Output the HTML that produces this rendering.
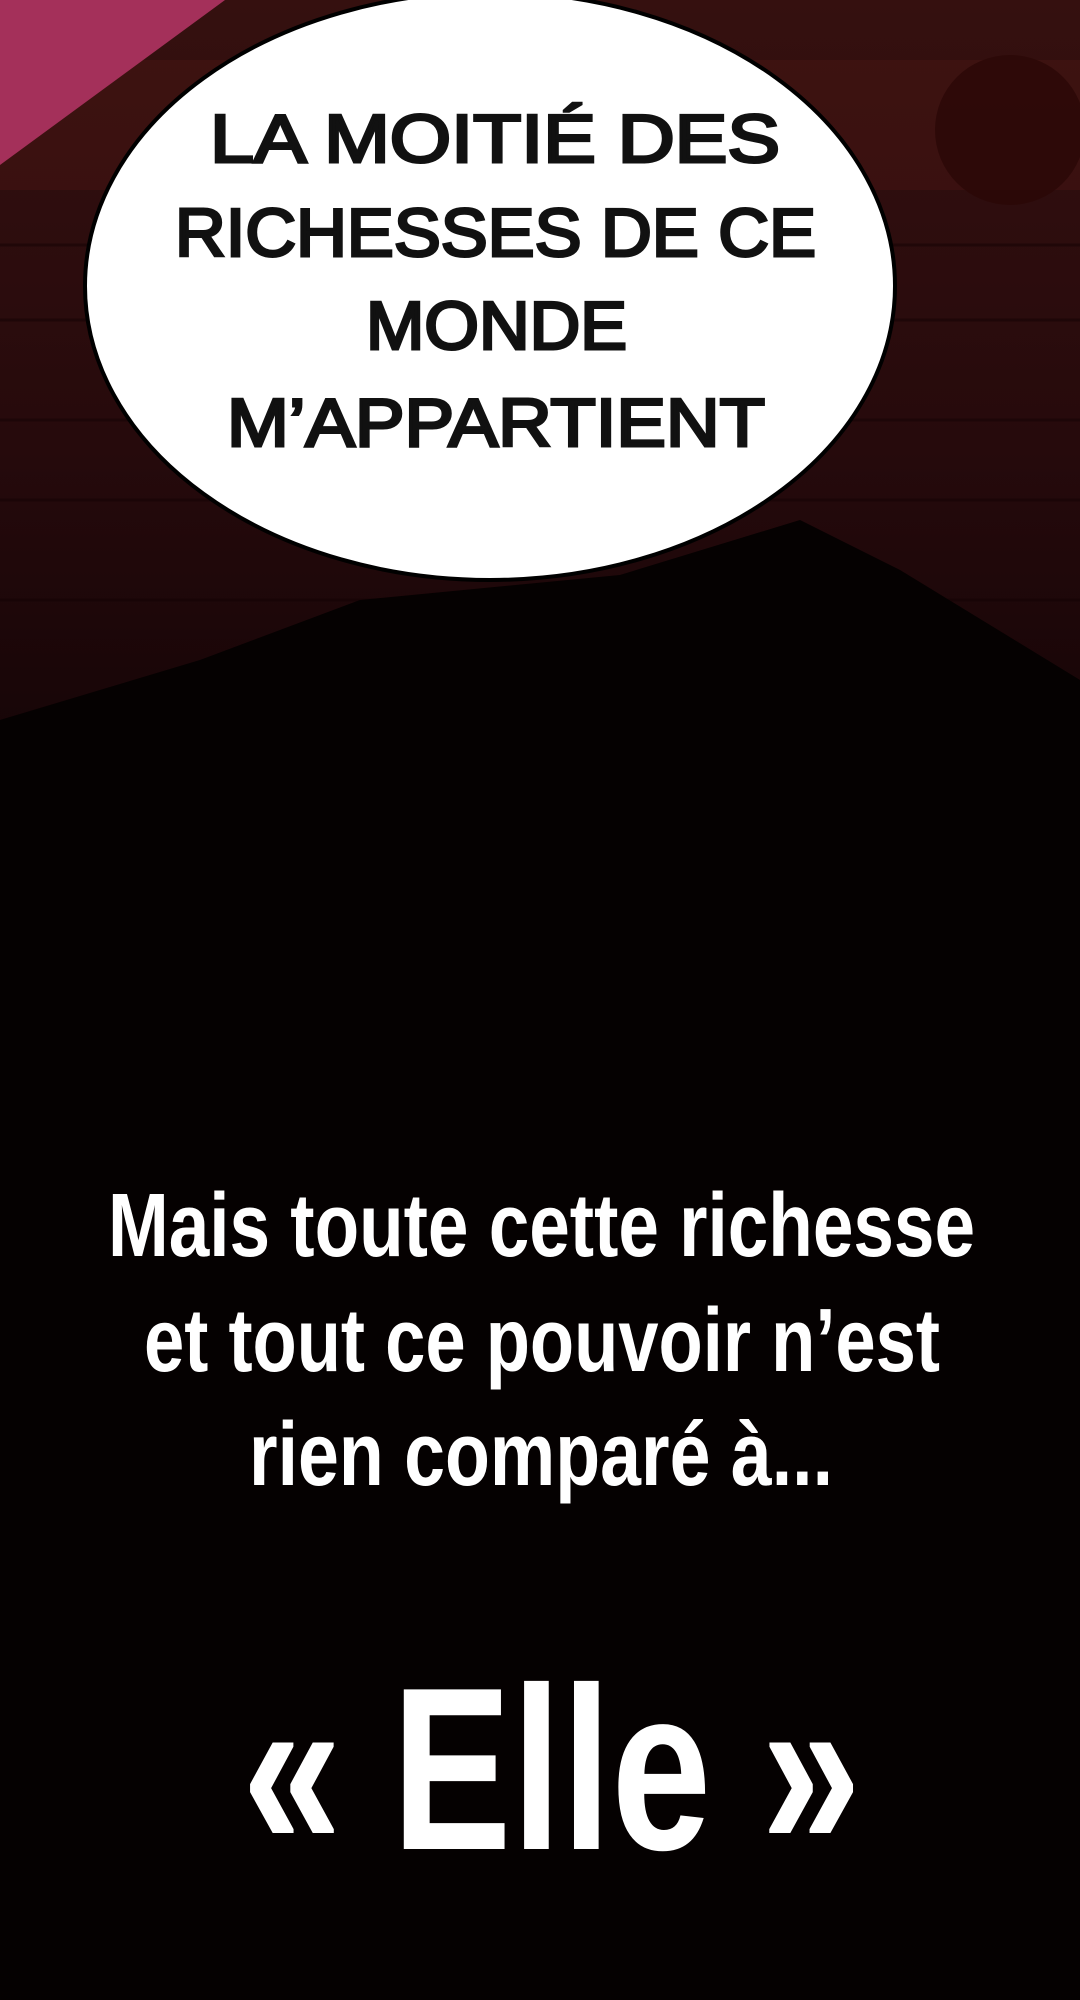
<!DOCTYPE html>
<html><head><meta charset="utf-8"><style>
html,body{margin:0;padding:0;background:#000;}
svg{display:block;}
</style></head><body>
<svg width="1080" height="2000" viewBox="0 0 1080 2000" xmlns="http://www.w3.org/2000/svg">
<defs>
<linearGradient id="bg" x1="0" y1="0" x2="0" y2="1">
<stop offset="0" stop-color="#35100f"/>
<stop offset="0.6" stop-color="#260a0c"/>
<stop offset="1" stop-color="#170507"/>
</linearGradient>
</defs>
<rect width="1080" height="2000" fill="#000"/>
<rect width="1080" height="740" fill="url(#bg)"/>
<g stroke="#140305" stroke-width="3" opacity="0.5">
<line x1="0" y1="245" x2="1080" y2="245"/>
<line x1="0" y1="320" x2="1080" y2="320"/>
<line x1="0" y1="420" x2="1080" y2="420"/>
<line x1="0" y1="500" x2="1080" y2="500"/>
<line x1="0" y1="600" x2="1080" y2="600"/>
</g>
<rect x="0" y="60" width="1080" height="130" fill="#5a1a16" opacity="0.25"/>
<circle cx="1010" cy="130" r="75" fill="#2a0806" opacity="0.8"/>
<polygon points="0,0 225,0 0,165" fill="#a4305a"/>
<polygon points="0,720 200,660 360,600 620,575 800,520 900,570 1080,680 1080,2000 0,2000" fill="#050101"/>
<ellipse cx="490" cy="286" rx="405" ry="294" fill="#fff" stroke="#000" stroke-width="4"/>
<g font-family="Liberation Sans, sans-serif" fill="#111" stroke="#111" stroke-width="3" font-size="68">
<text x="210" y="162" textLength="570" lengthAdjust="spacingAndGlyphs">LA MOITIÉ DES</text>
<text x="175" y="256" textLength="641" lengthAdjust="spacingAndGlyphs">RICHESSES DE CE</text>
<text x="366" y="349" textLength="261" lengthAdjust="spacingAndGlyphs">MONDE</text>
<text x="227" y="446" textLength="538" lengthAdjust="spacingAndGlyphs">M’APPARTIENT</text>
</g>
<g font-family="Liberation Sans, sans-serif" font-weight="bold" fill="#fff">
<text x="108" y="1256" font-size="90" textLength="867" lengthAdjust="spacingAndGlyphs">Mais toute cette richesse</text>
<text x="144" y="1371" font-size="90" textLength="796" lengthAdjust="spacingAndGlyphs">et tout ce pouvoir n’est</text>
<text x="249" y="1485" font-size="90" textLength="584" lengthAdjust="spacingAndGlyphs">rien comparé à...</text>
<text x="242" y="1849" font-size="232" textLength="619" lengthAdjust="spacingAndGlyphs">« Elle »</text>
</g>
</svg>
</body></html>
